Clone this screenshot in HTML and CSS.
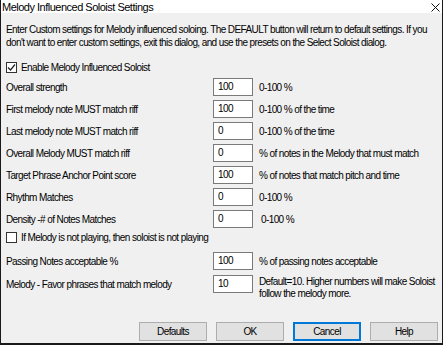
FILE: index.html
```html
<!DOCTYPE html>
<html lang="en">
<head>
  <meta charset="UTF-8">
  <title>Melody Influenced Soloist Settings</title>
  <link rel="stylesheet" href="styles.css">
</head>
<body>
  <div class="dialog">
    <div class="titlebar">
      <span class="title">Melody Influenced Soloist Settings</span>
      <svg class="close" width="9" height="9" viewBox="0 0 9 9">
        <path d="M0.5 0.5 L8.5 8.5 M8.5 0.5 L0.5 8.5" stroke="#111" stroke-width="1" fill="none"/>
      </svg>
    </div>
    <div class="content">
      <p class="intro">Enter Custom settings for Melody influenced soloing. The DEFAULT button will return to default settings. If you don't want to enter custom settings, exit this dialog, and use the presets on the Select Soloist dialog.</p>

      <label class="check-row enable">
        <span class="box checked">
          <svg width="9" height="9" viewBox="0 0 9 9"><path d="M1 4.5 L3.5 7 L8 1.5" stroke="#222" stroke-width="1.2" fill="none"/></svg>
        </span>
        Enable Melody Influenced Soloist
      </label>

      <div class="fields">
        <span class="label">Overall strength</span>
        <span class="input">100</span>
        <span class="note">0-100 %</span>

        <span class="label">First melody note MUST match riff</span>
        <span class="input">100</span>
        <span class="note">0-100 % of the time</span>

        <span class="label">Last melody note MUST match riff</span>
        <span class="input">0</span>
        <span class="note">0-100 % of the time</span>

        <span class="label">Overall Melody MUST match riff</span>
        <span class="input">0</span>
        <span class="note">% of notes in the Melody that must match</span>

        <span class="label">Target Phrase Anchor Point score</span>
        <span class="input">100</span>
        <span class="note">% of notes that match pitch and time</span>

        <span class="label">Rhythm Matches</span>
        <span class="input">0</span>
        <span class="note">0-100 %</span>

        <span class="label">Density -# of Notes Matches</span>
        <span class="input">0</span>
        <span class="note shift">0-100 %</span>
      </div>

      <label class="check-row playing">
        <span class="box"></span>
        If Melody is not playing, then soloist is not playing
      </label>

      <div class="fields lower">
        <span class="label">Passing Notes acceptable %</span>
        <span class="input">100</span>
        <span class="note">% of passing notes acceptable</span>

        <span class="label">Melody - Favor phrases that match melody</span>
        <span class="input">10</span>
        <span class="note multi">Default=10. Higher numbers will make Soloist<br>follow the melody more.</span>
      </div>
    </div>

    <div class="buttons">
      <button class="btn">Defaults</button>
      <button class="btn">OK</button>
      <button class="btn focused">Cancel</button>
      <button class="btn">Help</button>
    </div>
  </div>
</body>
</html>
```

FILE: styles.css
```css
* {
  margin: 0;
  padding: 0;
  box-sizing: border-box;
}
body {
  font-family: 'Liberation Sans', Arial, sans-serif;
  font-size: 10px;
  letter-spacing: -0.6px;
  color: #000;
  background: #fff;
}
.dialog {
  width: 443px;
  height: 345px;
  background: #f0f0f0;
  border-left: 1px solid #1a1a1a;
  border-right: 1px solid #1a1a1a;
  border-bottom: 2px solid #1a1a1a;
  display: flex;
  flex-direction: column;
}
.titlebar {
  height: 13px;
  background: #fff;
  display: flex;
  justify-content: space-between;
  align-items: center;
  padding: 0 2px 0 1px;
}
.title {
  font-size: 11px;
  letter-spacing: -0.5px;
}
.close {
  margin-top: 1px;
}
.content {
  padding: 0 5px;
}
.intro {
  margin-top: 10px;
  line-height: 13px;
}
.check-row {
  display: flex;
  align-items: center;
  gap: 4px;
  height: 13px;
}
.enable {
  margin-top: 12px;
}
.playing {
  margin-top: 3px;
}
.box {
  width: 11px;
  height: 11px;
  border: 1px solid #333;
  background: #fff;
  display: flex;
  align-items: center;
  justify-content: center;
}
.fields {
  display: grid;
  grid-template-columns: 201px 40px 1fr;
  grid-auto-rows: 18px;
  row-gap: 4px;
  column-gap: 6px;
  margin-top: 4px;
  align-items: center;
}
.fields.lower {
  margin-top: 8px;
  row-gap: 5px;
}
.input {
  height: 18px;
  background: #fff;
  border: 1px solid #7a7a7a;
  padding-left: 4px;
  line-height: 16px;
}
.note.shift {
  padding-left: 2px;
}
.note.multi {
  align-self: start;
  margin-top: 1px;
  line-height: 12px;
  white-space: nowrap;
}
.buttons {
  margin-top: auto;
  margin-bottom: 2px;
  display: flex;
  justify-content: flex-end;
  gap: 9px;
  padding-right: 4px;
}
.btn {
  width: 68px;
  height: 19px;
  background: #e1e1e1;
  border: 1px solid #adadad;
  font-family: inherit;
  font-size: 10px;
  letter-spacing: -0.6px;
  color: #000;
}
.btn.focused {
  border: 2px solid #0078d7;
}
```
